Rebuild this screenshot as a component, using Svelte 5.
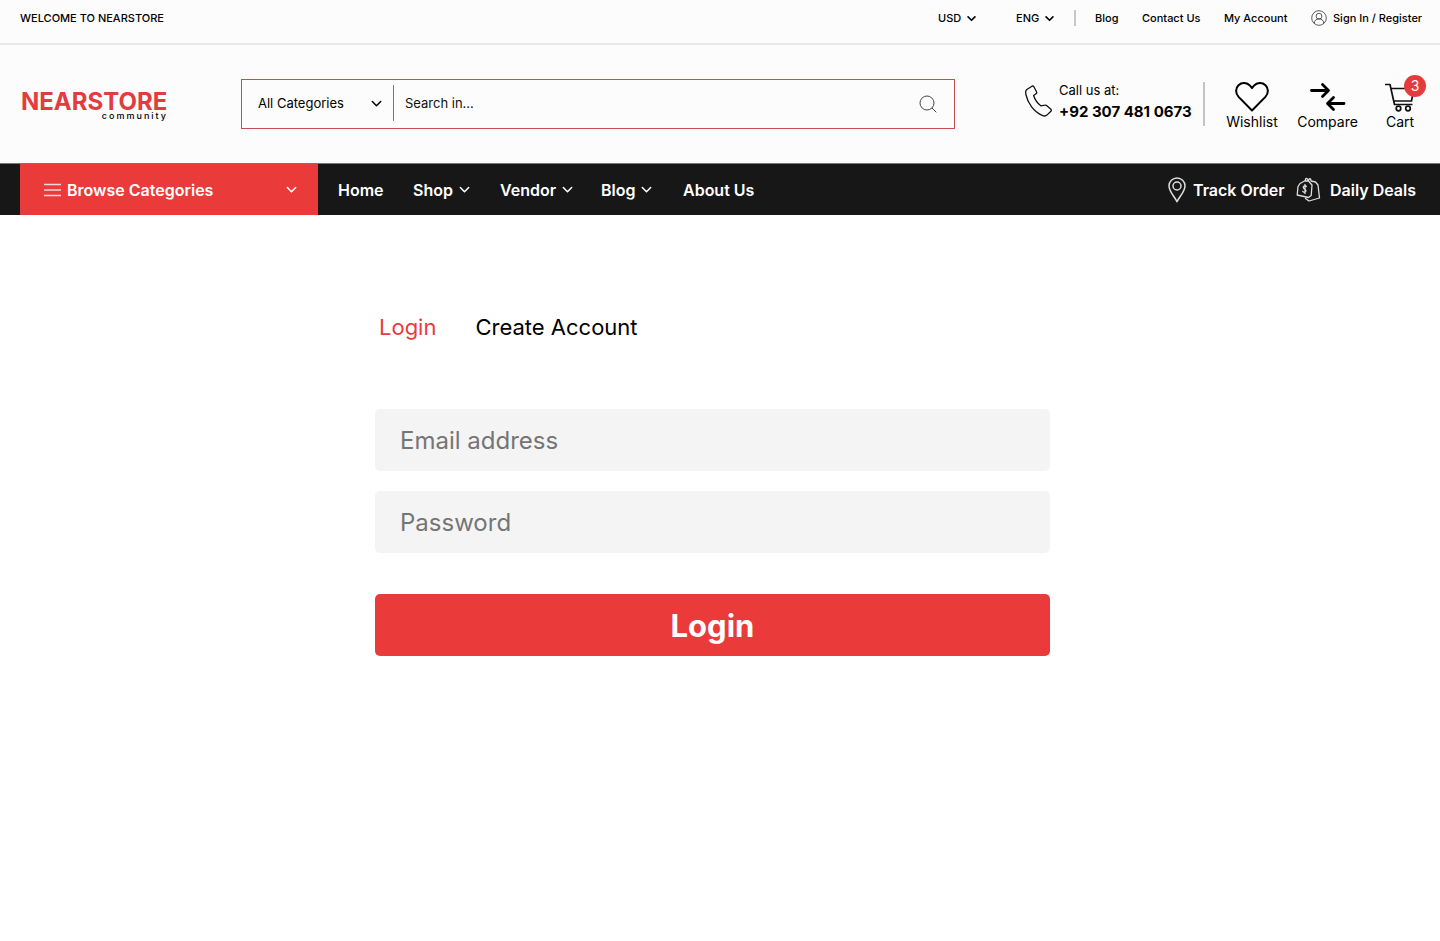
<script>
  const currencies = ['USD', 'EUR', 'GBP'];
  const languages = ['ENG', 'FRA', 'DEU'];
  const categories = ['All Categories', 'Electronics', 'Fashion'];
  const topLinks = [
    { label: 'Blog', cls: 'blog' },
    { label: 'Contact Us', cls: 'contact' },
    { label: 'My Account', cls: 'account' }
  ];
  const menu = [
    { label: 'Home', cls: 'home', sub: false },
    { label: 'Shop', cls: 'shop', sub: true },
    { label: 'Vendor', cls: 'vendor', sub: true },
    { label: 'Blog', cls: 'blog', sub: true },
    { label: 'About Us', cls: 'about', sub: false }
  ];
  let email = $state('');
  let password = $state('');
  let query = $state('');
</script>

{#snippet chevron(size, stroke)}
  <svg class="chevron" width={size} height={size} viewBox="0 0 10 10" fill="none" stroke="currentColor" stroke-width={stroke} stroke-linecap="round" stroke-linejoin="round" aria-hidden="true">
    <path d="M1.2 3.2 5 7l3.800-3.800" />
  </svg>
{/snippet}

{#snippet picker(label, options)}
  <span class="picker">
    <select aria-label={label}>
      {#each options as option}<option>{option}</option>{/each}
    </select>
    {@render chevron(9, 1.8)}
  </span>
{/snippet}

<header>
  <div class="topbar">
    <span class="welcome">WELCOME TO NEARSTORE</span>
    <div class="toplinks">
      {@render picker('Currency', currencies)}
      {@render picker('Language', languages)}
      <span class="rule"></span>
      {#each topLinks as link}<a class={link.cls} href="#top">{link.label}</a>{/each}
      <a class="signin" href="#signin">
        <svg width="16" height="16" viewBox="0 0 16 16" fill="none" stroke="#333" stroke-width=".8" aria-hidden="true">
          <circle cx="8" cy="8" r="7.300" />
          <circle cx="8" cy="6.200" r="2.900" />
          <path d="M3.300 13.400c0-3 2-4.500 4.700-4.500s4.700 1.500 4.700 4.500" />
        </svg>
        Sign In / Register
      </a>
    </div>
  </div>

  <div class="brandbar">
    <a class="logo" href="#home"><strong>NEARSTORE</strong><small>community</small></a>

    <form class="search" role="search" onsubmit={(e) => e.preventDefault()}>
      <span class="category">
        <select aria-label="Category">
          {#each categories as category}<option>{category}</option>{/each}
        </select>
        {@render chevron(11, 1.4)}
      </span>
      <input type="search" aria-label="Search" placeholder="Search in..." bind:value={query} />
      <button type="submit" aria-label="Search">
        <svg width="18" height="18" viewBox="0 0 18 18" fill="none" stroke="#444" stroke-width="1" aria-hidden="true">
          <circle cx="8" cy="8" r="7" /><path d="m13 13 4.300 4.300" />
        </svg>
      </button>
    </form>

    <div class="tools">
      <a class="phone" href="tel:+923074810673">
        <svg width="27" height="32" viewBox="0 0 27 32" fill="none" stroke="#111" stroke-width="1.300" stroke-linejoin="round" aria-hidden="true">
          <path d="M1.800 4.500 7 1.200c.8-.4 1.500-.1 1.900.6l2.600 5c.4.800.2 1.500-.5 2L8.600 10.500c1.500 4.500 3.800 7.800 7.200 10.300l4.200-.6c.7-.2 1.300 0 1.900.5l4 3.600c.6.600.6 1.300 0 1.900l-4 3.900c-1.300 1.200-2.900 1.100-4.700.3C8.800 27 2.800 18.300.9 9.500.4 7 .4 5.500 1.800 4.500Z" />
        </svg>
        <span><span class="call">Call us at:</span><strong>+92 307 481 0673</strong></span>
      </a>
      <span class="divider"></span>
      <a class="tool wishlist" href="#wishlist">
        <svg width="34" height="30" viewBox="0 0 34 30" fill="none" stroke="#000" stroke-width="2" stroke-linejoin="round" aria-hidden="true">
          <path d="M17 28.500 3.600 14.900C.2 11.200.4 6.200 3.500 3.200c3.400-3.200 8.600-2.700 11.500.5l2 2.400 2-2.400c2.900-3.200 8.100-3.700 11.500-.5 3.100 3 3.300 8 -.1 11.700Z" />
        </svg>
        Wishlist
      </a>
      <a class="tool compare" href="#compare">
        <svg width="36" height="30" viewBox="0 0 36 30" fill="none" stroke="#000" stroke-width="2.800" stroke-linecap="round" stroke-linejoin="round" aria-hidden="true">
          <path d="M1.500 8.500H18M12.500 2.500l6 6-6 6M34 21.500H18M23.500 15.500l-6 6 6 6" />
        </svg>
        Compare
      </a>
      <a class="tool cart" href="#cart">
        <svg width="32" height="30" viewBox="0 0 32 30" fill="none" stroke="#111" stroke-width="1.700" stroke-linejoin="round" aria-hidden="true">
          <path d="M1 2.500h5l4.500 20h18M7 6.500h23l-2.500 12.500H10" />
          <circle cx="14.500" cy="26.500" r="2.300" /><circle cx="24" cy="26.500" r="2.300" />
        </svg>
        Cart
        <span class="badge">3</span>
      </a>
    </div>
  </div>

  <nav>
    <button class="browse" type="button">
      <svg width="17" height="14" viewBox="0 0 17 14" stroke="#fbd5d5" stroke-width="1.500" aria-hidden="true">
        <path d="M0 1.500h17M0 7h17M0 12.500h17" />
      </svg>
      <span>Browse Categories</span>
      {@render chevron(11, 1.4)}
    </button>
    <div class="menu">
      {#each menu as item}
        <a class={item.cls} href="#menu">{item.label}{#if item.sub}{@render chevron(11, 1.4)}{/if}</a>
      {/each}
    </div>
    <div class="extras">
      <a class="track" href="#track">
        <svg width="18" height="26" viewBox="0 0 18 26" fill="none" stroke="#ddd" stroke-width="1.500" stroke-linejoin="round" aria-hidden="true">
          <path d="M9 24.700C6.500 19.500 1 14.500 1 9a8 8 0 0 1 16 0c0 5.500-5.500 10.500-8 15.700Z" />
          <circle cx="9" cy="9" r="4" />
        </svg>
        Track Order
      </a>
      <a class="deals" href="#deals">
        <svg width="25" height="25" viewBox="0 0 25 25" fill="none" stroke="#ddd" stroke-width="1.300" stroke-linejoin="round" stroke-linecap="round" aria-hidden="true">
          <path d="M4 6.500 8.500 4h4l3.500 4-.8 10.500-2.700 2L1.200 18 2 9.500ZM9.500 4c-.5-3.500 2-3.500 2.500-.5M12.500 4c0-3 2.500-3 2.500 0M15 4l4.500 1 2.500 3 1.500 13-10.500 3-3.500-2.500M16 8l-.8 10.500" />
          <path d="M10.300 9.500c-1-1.400-3-.8-3 .8 0 2 2.800 1.700 2.600 3.700-.2 1.700-2.400 1.800-3.200.3M9 7.500v9" />
        </svg>
        Daily Deals
      </a>
    </div>
  </nav>
</header>

<main>
  <div class="tabs">
    <button class="active" type="button">Login</button>
    <button type="button">Create Account</button>
  </div>
  <form class="login" onsubmit={(e) => e.preventDefault()}>
    <input type="email" aria-label="Email address" placeholder="Email address" bind:value={email} />
    <input type="password" aria-label="Password" placeholder="Password" bind:value={password} />
    <button type="submit">Login</button>
  </form>
</main>

<style>
  :global(body) { margin: 0; background: #fff; color: #000; font-family: Inter, sans-serif; }
  header, main { box-sizing: border-box; }
  header *, main * { box-sizing: border-box; }
  a { color: inherit; text-decoration: none; white-space: nowrap; }
  button, input, select { border: 0; padding: 0; background: none; font: inherit; color: inherit; }
  button { cursor: pointer; }
  select { appearance: none; cursor: pointer; }
  svg { display: block; flex: none; }

  .topbar { display: flex; justify-content: space-between; height: 45px; padding: 0 16px 7px 20px; align-items: center; background: #fcfcfc; border-bottom: 2px solid #e8e8e8; font-size: 11px; font-weight: 500; }
  .toplinks { display: flex; align-items: center; }
  .picker { position: relative; display: flex; align-items: center; width: 38px; margin-right: 40px; }
  .picker select { width: 100%; }
  .picker .chevron { position: absolute; right: 0; pointer-events: none; }
  .picker + .picker { margin-right: 20px; }
  .rule { width: 2px; height: 16px; margin-right: 19px; background: #c8c8c8; }
  .toplinks .blog { width: 47px; }
  .toplinks .contact { width: 82px; }
  .toplinks .account { width: 87px; }
  .signin { display: flex; align-items: center; gap: 6px; width: 113px; }

  .brandbar { display: flex; align-items: center; height: 118px; padding: 0 14px 0 20px; background: #fcfcfc; }
  .logo { display: flex; flex-direction: column; width: 221px; padding: 4px 0 0 1px; }
  .logo strong { width: 146px; font-size: 24px; line-height: 20px; color: #e23d3e; }
  .logo small { width: 147px; font-size: 9px; line-height: 8px; font-weight: 500; letter-spacing: 2px; text-align: right; }
  .search { display: flex; flex: 1; align-items: center; height: 50px; border: 1px solid #c94d50; font-size: 13px; }
  .category { position: relative; display: flex; align-items: center; width: 152px; height: 36px; margin-top: -2px; padding-left: 16px; border-right: 1px solid #777; }
  .category select { width: 100%; }
  .category .chevron { position: absolute; right: 11px; pointer-events: none; }
  .search input { flex: 1; min-width: 0; padding: 0 0 2px 11px; outline: 0; }
  .search input::placeholder { color: #111; }
  .search button { margin-right: 17px; }
  .tools { display: flex; align-items: center; margin-left: 70px; }
  .phone { display: flex; align-items: center; gap: 7px; width: 178px; margin-top: -6px; }
  .phone span { display: block; }
  .phone .call { font-size: 13px; line-height: 22px; }
  .phone strong { font-size: 15px; font-weight: 700; line-height: 22px; }
  .divider { width: 2px; height: 44px; margin-right: 4px; background: #c4c4c4; }
  .tool { position: relative; display: flex; flex-direction: column; align-items: center; gap: 2px; margin-left: 14px; padding-top: 3px; font-size: 14px; line-height: 16px; }
  .wishlist { width: 58px; }
  .compare { width: 65px; }
  .cart { width: 52px; }
  .badge { position: absolute; top: -4px; right: 0; width: 22px; height: 22px; border-radius: 50%; background: #e53b3c; color: #fff; line-height: 22px; text-align: center; }

  nav { display: flex; height: 52px; padding-left: 20px; background: #171717; color: #fff; font-size: 16px; font-weight: 600; border-top: 1px solid #777; }
  .browse { display: flex; align-items: center; width: 298px; padding: 0 21px 0 24px; background: #ea3a3a; }
  .browse span { margin-left: 6px; }
  .browse .chevron { margin-left: auto; }
  .menu { display: flex; padding-left: 20px; }
  .menu a { display: flex; align-items: center; gap: 6px; }
  .home { width: 75px; }
  .shop { width: 87px; }
  .vendor { width: 101px; }
  .menu .blog { width: 82px; }
  .extras { display: flex; align-items: center; margin-left: auto; }
  .extras a { display: flex; align-items: center; }
  .track { width: 128px; gap: 7px; }
  .deals { width: 144px; gap: 9px; }

  main { width: 100%; max-width: 690px; margin: 0 auto; padding: 96px 15px 40px 0; }
  .tabs { display: flex; gap: 39px; padding-left: 4px; font-size: 22px; line-height: 32px; }
  .active { color: #ea3a3a; }
  .login { display: flex; flex-direction: column; gap: 20px; margin-top: 66px; }
  .login input { width: 100%; height: 62px; padding: 0 25px; border-radius: 5px; background: #f4f4f4; font-size: 24px; }
  .login input::placeholder { color: #757575; }
  .login button { height: 62px; margin-top: 21px; border-radius: 5px; background: #ea3a3a; color: #fff; font-size: 31px; font-weight: 700; }
</style>
